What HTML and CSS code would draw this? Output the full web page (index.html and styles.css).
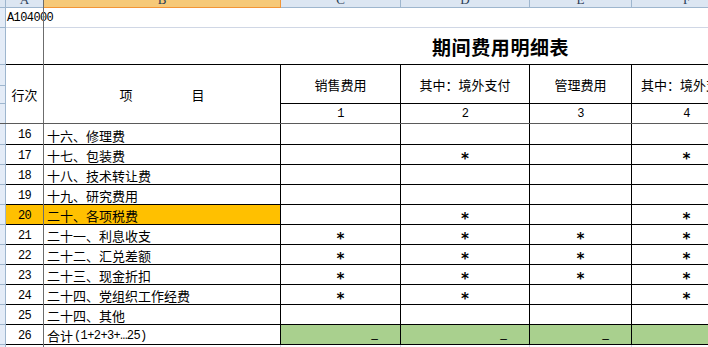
FILE: index.html
```html
<!DOCTYPE html>
<html lang="zh-CN">
<head>
<meta charset="utf-8">
<title>期间费用明细表</title>
<link rel="stylesheet" href="styles.css">
</head>
<body>
<div class="sheet">
  <div class="ch corner"></div>
  <div class="ch"><span>A</span></div>
  <div class="ch sel"><span>B</span></div>
  <div class="ch"><span>C</span></div>
  <div class="ch"><span>D</span></div>
  <div class="ch"><span>E</span></div>
  <div class="ch"><span>F</span></div>

  <div class="rh"></div>
  <div class="code">A104000</div>

  <div class="rh"></div>
  <div class="title">期间费用明细表</div>

  <div class="rh rh-a"></div>
  <div class="c r2">行次</div>
  <div class="c r2 item"><span>项</span><span>目</span></div>
  <div class="c">销售费用</div>
  <div class="c">其中：境外支付</div>
  <div class="c">管理费用</div>
  <div class="c">其中：境外支付</div>

  <div class="rh"></div>
  <div class="c mono">1</div>
  <div class="c mono">2</div>
  <div class="c mono">3</div>
  <div class="c mono">4</div>

  <div class="rh"></div>
  <div class="c d mono">16</div>
  <div class="c d left">十六、修理费</div>
  <div class="c d"></div><div class="c d"></div><div class="c d"></div><div class="c d"></div>

  <div class="rh"></div>
  <div class="c d mono">17</div>
  <div class="c d left">十七、包装费</div>
  <div class="c d"></div><div class="c d star">*</div><div class="c d"></div><div class="c d star">*</div>

  <div class="rh"></div>
  <div class="c d mono">18</div>
  <div class="c d left">十八、技术转让费</div>
  <div class="c d"></div><div class="c d"></div><div class="c d"></div><div class="c d"></div>

  <div class="rh"></div>
  <div class="c d mono">19</div>
  <div class="c d left">十九、研究费用</div>
  <div class="c d"></div><div class="c d"></div><div class="c d"></div><div class="c d"></div>

  <div class="rh"></div>
  <div class="c d mono orange">20</div>
  <div class="c d left orange">二十、各项税费</div>
  <div class="c d"></div><div class="c d star">*</div><div class="c d"></div><div class="c d star">*</div>

  <div class="rh"></div>
  <div class="c d mono">21</div>
  <div class="c d left">二十一、利息收支</div>
  <div class="c d star">*</div><div class="c d star">*</div><div class="c d star">*</div><div class="c d star">*</div>

  <div class="rh"></div>
  <div class="c d mono">22</div>
  <div class="c d left">二十二、汇兑差额</div>
  <div class="c d star">*</div><div class="c d star">*</div><div class="c d star">*</div><div class="c d star">*</div>

  <div class="rh"></div>
  <div class="c d mono">23</div>
  <div class="c d left">二十三、现金折扣</div>
  <div class="c d star">*</div><div class="c d star">*</div><div class="c d star">*</div><div class="c d star">*</div>

  <div class="rh"></div>
  <div class="c d mono">24</div>
  <div class="c d left">二十四、党组织工作经费</div>
  <div class="c d star">*</div><div class="c d star">*</div><div class="c d"></div><div class="c d star">*</div>

  <div class="rh"></div>
  <div class="c d mono">25</div>
  <div class="c d left">二十四、其他</div>
  <div class="c d"></div><div class="c d"></div><div class="c d"></div><div class="c d"></div>

  <div class="rh"></div>
  <div class="c d mono">26</div>
  <div class="c d left">合计<span class="asc">(1+2+3+…25)</span></div>
  <div class="c d green">–</div><div class="c d green">–</div><div class="c d green">–</div><div class="c d green"></div>

  <div class="rh"></div>
  <div class="g"></div><div class="g"></div><div class="g"></div><div class="g"></div><div class="g"></div><div class="g"></div>

  <div class="freeze-v"></div>
  <div class="freeze-h"></div>
</div>
</body>
</html>
```

FILE: styles.css
```css
html, body {
  margin: 0;
  padding: 0;
}

body {
  width: 708px;
  height: 347px;
  overflow: hidden;
  background: #ffffff;
  color: #000000;
  font-family: "Noto Sans CJK SC", sans-serif;
  font-size: 13px;
}

.sheet {
  position: relative;
  display: grid;
  grid-template-columns: 6px 38px 237px 120px 129px 102px 110px;
  grid-template-rows: 8px 20px 37px 39px 20px 21px repeat(10, 20px) 6px;
}

.sheet > div {
  box-sizing: border-box;
  min-width: 0;
}

/* column headers */
.ch {
  background: #dce6f2;
  border-right: 1px solid #9eb6ce;
  border-bottom: 1px solid #9eb6ce;
  overflow: hidden;
  text-align: center;
  font-family: "Liberation Serif", serif;
  font-size: 13px;
  line-height: 13px;
  color: #2a3d56;
}

.ch span {
  display: block;
  margin-top: -7px;
}

.ch.sel {
  background: #f6c978;
  border-right-color: #f29536;
  border-bottom-color: #f29536;
}

.ch.corner {
  background: #dce6f2;
}

/* row header strip */
.rh {
  background: #e4ecf7;
  border-right: 1px solid #9eb6ce;
  border-bottom: 1px solid #9eb6ce;
}

.rh-a {
  background: linear-gradient(to bottom, #e4ecf7 20px, #9eb6ce 20px, #9eb6ce 21px, #e4ecf7 21px);
}

/* top rows */
.code {
  grid-column: span 6;
  border-bottom: 1px solid #d0d7e5;
  display: flex;
  align-items: center;
  padding-left: 1px;
  white-space: nowrap;
  font-family: "Liberation Mono", monospace;
  font-size: 12px;
  letter-spacing: -0.6px;
}

.title {
  grid-column: span 6;
  border-bottom: 1px solid #000000;
  display: flex;
  align-items: center;
  padding-left: 426px;
  font-weight: 700;
  font-size: 19px;
  letter-spacing: 0.6px;
  white-space: nowrap;
}

/* table cells */
.c {
  border-right: 1px solid #000000;
  border-bottom: 1px solid #000000;
  display: flex;
  align-items: center;
  justify-content: center;
  white-space: nowrap;
  overflow: hidden;
  line-height: 1;
}

.r2 {
  grid-row: span 2;
}

.item {
  gap: 59px;
}

.d {
  padding-top: 2px;
}

.left {
  justify-content: flex-start;
  padding-left: 3px;
}

.mono,
.asc {
  font-family: "Liberation Mono", monospace;
  font-size: 12px;
  letter-spacing: -0.6px;
}

.asc {
  margin-left: 1px;
}

.c.star {
  overflow: visible;
  font-family: "DejaVu Sans Mono", monospace;
  font-size: 15px;
  font-weight: 700;
  padding-top: 9px;
}

.orange {
  background: #ffc000;
}

.green {
  background: #a9d08e;
  justify-content: flex-end;
  padding-right: 22px;
  padding-top: 8px;
  font-family: "Liberation Sans", sans-serif;
  font-size: 12px;
}

.g {
  border-right: 1px solid #d0d7e5;
}

/* frozen pane split lines lie over the cells */
.freeze-v {
  position: absolute;
  left: 43px;
  top: 0;
  width: 1px;
  height: 100%;
  background: #6c6c6c;
}

.freeze-h {
  position: absolute;
  left: 0;
  top: 123px;
  width: 100%;
  height: 1px;
  background: #5a5a5a;
}
```
